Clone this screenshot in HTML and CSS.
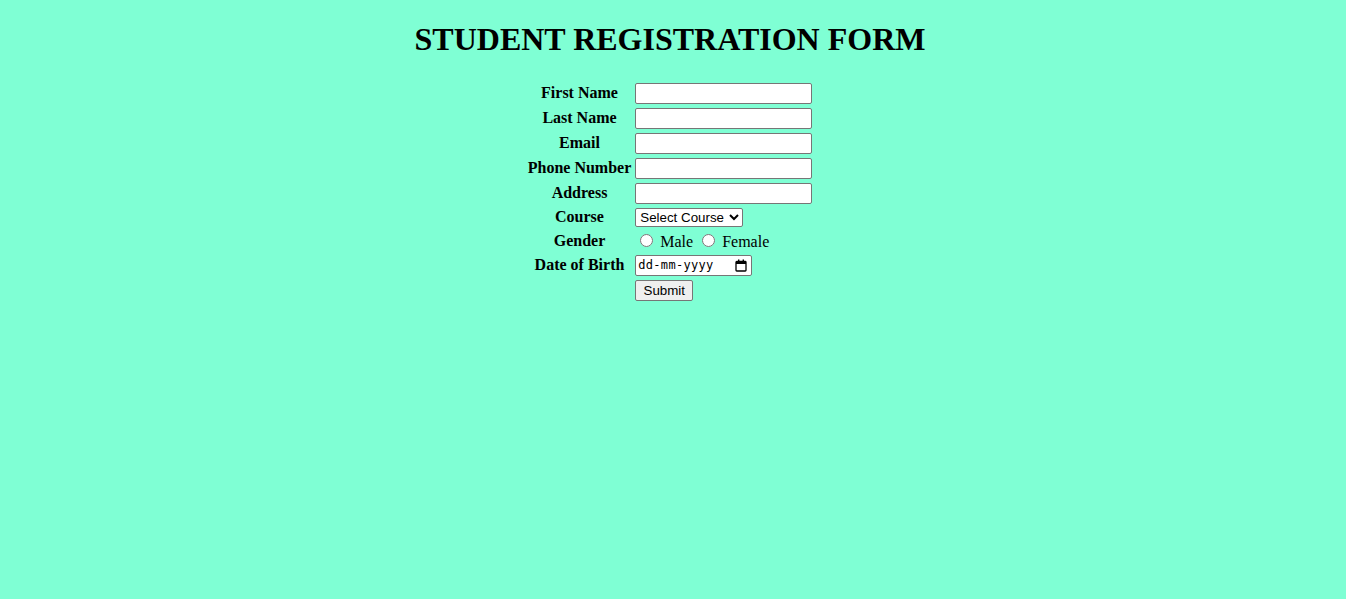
FILE: index.html
```html
<!DOCTYPE html>
<html>
<head>
<meta charset="utf-8">
<title>Student Registration Form</title>
<link rel="stylesheet" href="styles.css">
</head>
<body class="page">
<h1 class="title">STUDENT REGISTRATION FORM</h1>
<form class="reg-form">
<table class="reg-table">
<tr><th>First Name</th><td><input class="text-in" type="text"></td></tr>
<tr><th>Last Name</th><td><input class="text-in" type="text"></td></tr>
<tr><th>Email</th><td><input class="text-in" type="email"></td></tr>
<tr><th>Phone Number</th><td><input class="text-in" type="tel"></td></tr>
<tr><th>Address</th><td><input class="text-in" type="text"></td></tr>
<tr><th>Course</th><td><select class="sel"><option>Select Course</option><option>B.Tech</option><option>BCA</option><option>MCA</option></select></td></tr>
<tr><th>Gender</th><td><input class="radio" type="radio" name="g" id="m"> <label for="m">Male</label> <input class="radio" type="radio" name="g" id="f"> <label for="f">Female</label></td></tr>
<tr><th>Date of Birth</th><td><span class="date-wrap"><input class="date-in" type="text" placeholder="dd-mm-yyyy"><svg class="cal" width="12" height="13" viewBox="0 0 12 13"><rect x="1" y="2.5" width="10" height="9.5" rx="0.8" fill="none" stroke="#000" stroke-width="1.3"/><rect x="1" y="2.5" width="10" height="2.5" fill="#000"/><rect x="3" y="0.5" width="1.4" height="3" fill="#000"/><rect x="7.6" y="0.5" width="1.4" height="3" fill="#000"/></svg></span></td></tr>
<tr><th></th><td><button class="btn" type="submit">Submit</button></td></tr>
</table>
</form>
</body>
</html>
```

FILE: styles.css
```css
.page {
  background: #7fffd4;
  font-family: "Liberation Serif", "Times New Roman", serif;
  margin: 0 14px 8px 8px;
  color: #000;
}
.title {
  text-align: center;
  font-size: 32px;
  margin: 21.44px 0 21.44px;
  padding-top: 0;
}
.reg-table {
  margin: 0 auto;
  border-spacing: 2px;
}
.reg-table th {
  padding: 1px;
  text-align: center;
  font-size: 16px;
}
.reg-table td {
  padding: 1px;
  text-align: left;
  font-size: 16px;
}
.text-in {
  font-family: "Liberation Sans", Arial, sans-serif;
  font-size: 13.33px;
  width: 177px;
  height: 21px;
  box-sizing: border-box;
  border: 1px solid #767676;
  border-radius: 2px;
  background: #fff;
  padding: 1px 2px;
  margin: 0;
}
.sel {
  font-family: "Liberation Sans", Arial, sans-serif;
  font-size: 13.33px;
  height: 19px;
  width: 108px;
  margin: 0;
  border: 1px solid #767676;
  border-radius: 2px;
  background: #fff;
}
.radio {
  margin: 3px 3px 0 5px;
}
.date-wrap {
  position: relative;
  display: inline-block;
  vertical-align: middle;
}
.date-in {
  font-family: "DejaVu Sans Mono", "Liberation Mono", monospace;
  font-size: 12px;
  letter-spacing: 0.3px;
  width: 117px;
  height: 21px;
  box-sizing: border-box;
  margin: 0;
  border: 1px solid #767676;
  border-radius: 2px;
  background: #fff;
  padding: 1px 2px;
  display: block;
}
.date-in::placeholder {
  color: #000;
  opacity: 1;
}
.cal {
  position: absolute;
  right: 5px;
  top: 4px;
}
.btn {
  font-family: "Liberation Sans", Arial, sans-serif;
  font-size: 13.33px;
  height: 21px;
  width: 58px;
  margin: 0;
  padding: 1px 6px;
  border: 1px solid #767676;
  border-radius: 2px;
  background: #efefef;
}
```
